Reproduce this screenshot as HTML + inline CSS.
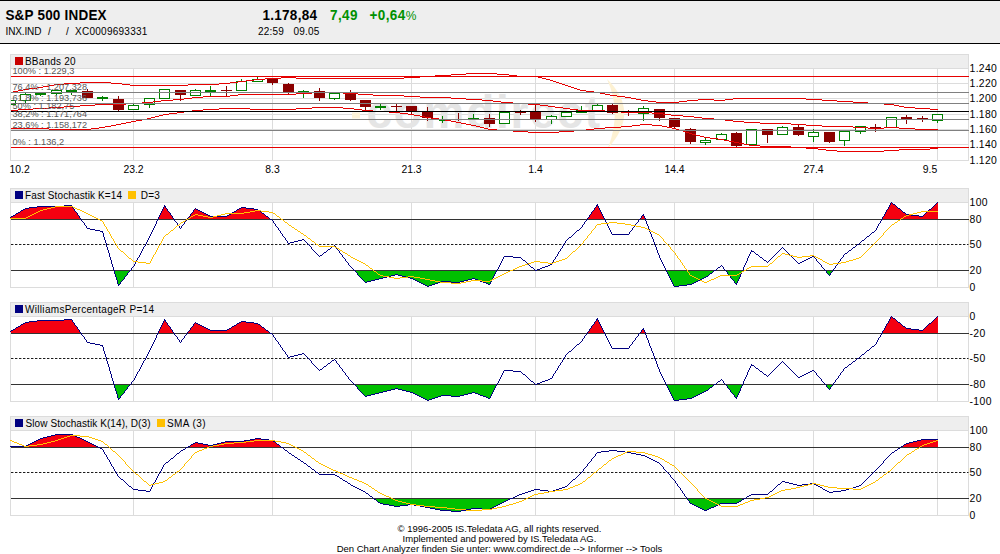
<!DOCTYPE html>
<html><head><meta charset="utf-8"><title>S&amp;P 500 INDEX</title>
<style>
html,body{margin:0;padding:0;background:#fff;}
body{width:1000px;height:554px;position:relative;overflow:hidden;font-family:"Liberation Sans",sans-serif;color:#000;}
#hd{position:absolute;left:0;top:0;width:1000px;height:42px;background:#eeeeee;border-top:1px solid #000;border-bottom:1px solid #000;}
.t{position:absolute;white-space:pre;line-height:1;}
.b{font-weight:bold;font-size:13.5px;transform:scale(1,1.1);transform-origin:0 84.7%;}
.s{font-size:10px;}
.g{color:#009000;}
.ft{position:absolute;left:0;width:999px;text-align:center;font-size:9.5px;line-height:10px;white-space:pre;}
svg{position:absolute;left:0;top:0;}
svg text{font-family:"Liberation Sans",sans-serif;}
</style></head><body>
<div id="hd"></div>
<div class="t b" style="left:5.4px;top:8.5px;letter-spacing:0.2px">S&amp;P 500 INDEX</div>
<div class="t s" style="left:5.6px;top:27.3px;letter-spacing:-0.15px">INX.IND</div>
<div class="t s" style="left:48px;top:27.3px">/</div>
<div class="t s" style="left:66px;top:27.3px">/</div>
<div class="t s" style="left:75px;top:27.3px;letter-spacing:0.26px">XC0009693331</div>
<div class="t b" style="left:262.5px;top:8.7px;letter-spacing:0.27px">1.178,84</div>
<div class="t b g" style="left:330px;top:8.7px;letter-spacing:0.4px">7,49</div>
<div class="t b g" style="left:369.5px;top:8.7px;letter-spacing:0.4px">+0,64<span style="font-weight:normal;font-size:12px;letter-spacing:0">%</span></div>
<div class="t s" style="left:258px;top:27.3px;letter-spacing:0.2px">22:59</div>
<div class="t s" style="left:293.5px;top:27.3px;letter-spacing:0.2px">09.05</div>
<svg width="1000" height="554" viewBox="0 0 1000 554" shape-rendering="crispEdges">
<rect x="10" y="54" width="959" height="106" fill="#fff"/>
<rect x="10" y="54" width="959" height="14" fill="#eeeeee"/>
<rect x="10.5" y="54.5" width="958" height="106" fill="none" stroke="#dcdcdc"/>
<line x1="10.50" y1="68.50" x2="968.50" y2="68.50" stroke="#dcdcdc" stroke-width="1" />
<line x1="133.50" y1="68.00" x2="133.50" y2="160.00" stroke="#dcdcdc" stroke-width="1" />
<line x1="272.50" y1="68.00" x2="272.50" y2="160.00" stroke="#dcdcdc" stroke-width="1" />
<line x1="411.50" y1="68.00" x2="411.50" y2="160.00" stroke="#dcdcdc" stroke-width="1" />
<line x1="535.50" y1="68.00" x2="535.50" y2="160.00" stroke="#dcdcdc" stroke-width="1" />
<line x1="674.50" y1="68.00" x2="674.50" y2="160.00" stroke="#dcdcdc" stroke-width="1" />
<line x1="813.50" y1="68.00" x2="813.50" y2="160.00" stroke="#dcdcdc" stroke-width="1" />
<line x1="937.50" y1="68.00" x2="937.50" y2="160.00" stroke="#dcdcdc" stroke-width="1" />
<line x1="10.50" y1="83.50" x2="968.50" y2="83.50" stroke="#dcdcdc" stroke-width="1" />
<line x1="10.50" y1="98.50" x2="968.50" y2="98.50" stroke="#dcdcdc" stroke-width="1" />
<line x1="10.50" y1="114.50" x2="968.50" y2="114.50" stroke="#dcdcdc" stroke-width="1" />
<line x1="10.50" y1="129.50" x2="968.50" y2="129.50" stroke="#dcdcdc" stroke-width="1" />
<line x1="10.50" y1="144.50" x2="968.50" y2="144.50" stroke="#dcdcdc" stroke-width="1" />
<text x="366.5" y="127.5" font-size="46" font-weight="bold" fill="#e5e5e5" letter-spacing="1.7" style="font-family:'Liberation Sans',sans-serif">comdirect</text>
<rect x="352" y="112.5" width="8" height="6" fill="#fdf3d8" shape-rendering="auto"/>
<path d="M607 79 Q641 112 608 148 Q622 112 607 79Z" fill="#fdf1d2" shape-rendering="auto"/>
<rect x="5.00" y="100.10" width="10" height="4.65" fill="#fff" stroke="#008000" stroke-width="1"/>
<line x1="25.46" y1="92.80" x2="25.46" y2="94.40" stroke="#008000" stroke-width="1" />
<line x1="25.46" y1="101.30" x2="25.46" y2="102.50" stroke="#008000" stroke-width="1" />
<rect x="20.46" y="94.90" width="10" height="5.90" fill="#fff" stroke="#008000" stroke-width="1"/>
<line x1="40.92" y1="94.60" x2="40.92" y2="95.90" stroke="#008000" stroke-width="1" />
<rect x="35.42" y="92.80" width="11" height="1.80" fill="#008000"/>
<line x1="56.37" y1="93.70" x2="56.37" y2="94.80" stroke="#008000" stroke-width="1" />
<rect x="51.37" y="90.80" width="10" height="2.40" fill="#fff" stroke="#008000" stroke-width="1"/>
<line x1="71.83" y1="91.80" x2="71.83" y2="94.50" stroke="#008000" stroke-width="1" />
<rect x="66.33" y="90.00" width="11" height="1.80" fill="#008000"/>
<line x1="87.29" y1="89.20" x2="87.29" y2="91.20" stroke="#8b0000" stroke-width="1" />
<rect x="81.79" y="91.20" width="11" height="6.60" fill="#8b0000"/>
<line x1="102.75" y1="95.50" x2="102.75" y2="96.90" stroke="#008000" stroke-width="1" />
<line x1="102.75" y1="98.60" x2="102.75" y2="100.90" stroke="#008000" stroke-width="1" />
<rect x="97.25" y="96.90" width="11" height="1.70" fill="#008000"/>
<line x1="118.21" y1="96.10" x2="118.21" y2="99.00" stroke="#8b0000" stroke-width="1" />
<line x1="118.21" y1="109.70" x2="118.21" y2="111.20" stroke="#8b0000" stroke-width="1" />
<rect x="112.71" y="99.00" width="11" height="10.70" fill="#8b0000"/>
<line x1="133.66" y1="103.70" x2="133.66" y2="105.10" stroke="#008000" stroke-width="1" />
<rect x="128.66" y="105.60" width="10" height="3.60" fill="#fff" stroke="#008000" stroke-width="1"/>
<line x1="149.12" y1="105.40" x2="149.12" y2="107.70" stroke="#008000" stroke-width="1" />
<rect x="144.12" y="98.90" width="10" height="6.00" fill="#fff" stroke="#008000" stroke-width="1"/>
<rect x="159.58" y="89.70" width="10" height="8.55" fill="#fff" stroke="#008000" stroke-width="1"/>
<line x1="180.04" y1="94.70" x2="180.04" y2="100.50" stroke="#8b0000" stroke-width="1" />
<rect x="174.54" y="90.30" width="11" height="4.40" fill="#8b0000"/>
<line x1="195.50" y1="88.70" x2="195.50" y2="90.30" stroke="#008000" stroke-width="1" />
<rect x="190.50" y="90.80" width="10" height="4.20" fill="#fff" stroke="#008000" stroke-width="1"/>
<line x1="210.95" y1="85.90" x2="210.95" y2="90.00" stroke="#008000" stroke-width="1" />
<line x1="210.95" y1="92.00" x2="210.95" y2="95.70" stroke="#008000" stroke-width="1" />
<rect x="205.45" y="90.00" width="11" height="2.00" fill="#008000"/>
<line x1="226.41" y1="85.90" x2="226.41" y2="95.70" stroke="#8b0000" stroke-width="1" />
<line x1="220.91" y1="90.30" x2="231.91" y2="90.30" stroke="#8b0000" stroke-width="1" />
<line x1="241.87" y1="79.30" x2="241.87" y2="81.40" stroke="#008000" stroke-width="1" />
<rect x="236.87" y="81.90" width="10" height="8.20" fill="#fff" stroke="#008000" stroke-width="1"/>
<line x1="257.33" y1="76.80" x2="257.33" y2="79.40" stroke="#008000" stroke-width="1" />
<rect x="252.33" y="79.90" width="10" height="1.30" fill="#fff" stroke="#008000" stroke-width="1"/>
<line x1="272.79" y1="82.70" x2="272.79" y2="84.90" stroke="#8b0000" stroke-width="1" />
<rect x="267.29" y="78.40" width="11" height="4.30" fill="#8b0000"/>
<line x1="288.24" y1="83.20" x2="288.24" y2="84.30" stroke="#8b0000" stroke-width="1" />
<line x1="288.24" y1="91.90" x2="288.24" y2="94.20" stroke="#8b0000" stroke-width="1" />
<rect x="282.74" y="84.30" width="11" height="7.60" fill="#8b0000"/>
<line x1="303.70" y1="89.80" x2="303.70" y2="90.60" stroke="#008000" stroke-width="1" />
<line x1="303.70" y1="91.90" x2="303.70" y2="97.60" stroke="#008000" stroke-width="1" />
<rect x="298.20" y="90.60" width="11" height="1.30" fill="#008000"/>
<line x1="319.16" y1="88.20" x2="319.16" y2="91.40" stroke="#8b0000" stroke-width="1" />
<line x1="319.16" y1="97.90" x2="319.16" y2="100.90" stroke="#8b0000" stroke-width="1" />
<rect x="313.66" y="91.40" width="11" height="6.50" fill="#8b0000"/>
<line x1="334.62" y1="98.75" x2="334.62" y2="100.00" stroke="#008000" stroke-width="1" />
<rect x="329.62" y="93.20" width="10" height="5.05" fill="#fff" stroke="#008000" stroke-width="1"/>
<line x1="350.08" y1="90.30" x2="350.08" y2="93.00" stroke="#8b0000" stroke-width="1" />
<line x1="350.08" y1="99.70" x2="350.08" y2="100.90" stroke="#8b0000" stroke-width="1" />
<rect x="344.58" y="93.00" width="11" height="6.70" fill="#8b0000"/>
<line x1="365.53" y1="106.50" x2="365.53" y2="110.60" stroke="#8b0000" stroke-width="1" />
<rect x="360.03" y="100.00" width="11" height="6.50" fill="#8b0000"/>
<line x1="380.99" y1="104.10" x2="380.99" y2="106.00" stroke="#008000" stroke-width="1" />
<line x1="380.99" y1="107.80" x2="380.99" y2="109.80" stroke="#008000" stroke-width="1" />
<rect x="375.49" y="106.00" width="11" height="1.80" fill="#008000"/>
<line x1="396.45" y1="103.80" x2="396.45" y2="110.60" stroke="#8b0000" stroke-width="1" />
<line x1="390.95" y1="106.50" x2="401.95" y2="106.50" stroke="#8b0000" stroke-width="1" />
<line x1="411.91" y1="111.40" x2="411.91" y2="114.20" stroke="#8b0000" stroke-width="1" />
<rect x="406.41" y="106.00" width="11" height="5.40" fill="#8b0000"/>
<line x1="427.37" y1="106.50" x2="427.37" y2="112.20" stroke="#8b0000" stroke-width="1" />
<line x1="427.37" y1="118.40" x2="427.37" y2="120.70" stroke="#8b0000" stroke-width="1" />
<rect x="421.87" y="112.20" width="11" height="6.20" fill="#8b0000"/>
<line x1="442.82" y1="116.30" x2="442.82" y2="122.80" stroke="#008000" stroke-width="1" />
<line x1="438.82" y1="120.30" x2="446.82" y2="120.30" stroke="#008000" stroke-width="1" />
<line x1="458.28" y1="113.00" x2="458.28" y2="121.20" stroke="#8b0000" stroke-width="1" />
<line x1="473.74" y1="113.90" x2="473.74" y2="118.40" stroke="#008000" stroke-width="1" />
<line x1="468.24" y1="118.40" x2="479.24" y2="118.40" stroke="#008000" stroke-width="1" />
<line x1="489.20" y1="113.90" x2="489.20" y2="118.40" stroke="#8b0000" stroke-width="1" />
<line x1="489.20" y1="124.40" x2="489.20" y2="126.50" stroke="#8b0000" stroke-width="1" />
<rect x="483.70" y="118.40" width="11" height="6.00" fill="#8b0000"/>
<rect x="499.66" y="112.70" width="10" height="11.20" fill="#fff" stroke="#008000" stroke-width="1"/>
<line x1="520.11" y1="109.80" x2="520.11" y2="115.20" stroke="#8b0000" stroke-width="1" />
<line x1="514.61" y1="112.60" x2="525.61" y2="112.60" stroke="#8b0000" stroke-width="1" />
<line x1="535.57" y1="104.90" x2="535.57" y2="111.90" stroke="#8b0000" stroke-width="1" />
<line x1="535.57" y1="118.70" x2="535.57" y2="121.70" stroke="#8b0000" stroke-width="1" />
<rect x="530.07" y="111.90" width="11" height="6.80" fill="#8b0000"/>
<line x1="551.03" y1="114.90" x2="551.03" y2="116.00" stroke="#008000" stroke-width="1" />
<line x1="551.03" y1="119.60" x2="551.03" y2="123.90" stroke="#008000" stroke-width="1" />
<rect x="546.03" y="116.50" width="10" height="2.60" fill="#fff" stroke="#008000" stroke-width="1"/>
<rect x="561.49" y="112.70" width="10" height="3.70" fill="#fff" stroke="#008000" stroke-width="1"/>
<line x1="581.95" y1="106.10" x2="581.95" y2="109.80" stroke="#008000" stroke-width="1" />
<rect x="576.45" y="109.80" width="11" height="2.80" fill="#008000"/>
<line x1="597.40" y1="103.60" x2="597.40" y2="104.90" stroke="#008000" stroke-width="1" />
<rect x="592.40" y="105.40" width="10" height="4.70" fill="#fff" stroke="#008000" stroke-width="1"/>
<line x1="612.86" y1="103.80" x2="612.86" y2="104.90" stroke="#8b0000" stroke-width="1" />
<line x1="612.86" y1="112.60" x2="612.86" y2="113.90" stroke="#8b0000" stroke-width="1" />
<rect x="607.36" y="104.90" width="11" height="7.70" fill="#8b0000"/>
<line x1="628.32" y1="109.80" x2="628.32" y2="116.00" stroke="#8b0000" stroke-width="1" />
<line x1="643.78" y1="106.10" x2="643.78" y2="108.20" stroke="#008000" stroke-width="1" />
<line x1="643.78" y1="113.50" x2="643.78" y2="120.70" stroke="#008000" stroke-width="1" />
<rect x="638.78" y="108.70" width="10" height="4.30" fill="#fff" stroke="#008000" stroke-width="1"/>
<line x1="659.24" y1="117.90" x2="659.24" y2="120.70" stroke="#8b0000" stroke-width="1" />
<rect x="653.74" y="109.00" width="11" height="8.90" fill="#8b0000"/>
<line x1="674.69" y1="126.90" x2="674.69" y2="128.50" stroke="#8b0000" stroke-width="1" />
<rect x="669.19" y="117.90" width="11" height="9.00" fill="#8b0000"/>
<line x1="690.15" y1="127.70" x2="690.15" y2="129.30" stroke="#8b0000" stroke-width="1" />
<line x1="690.15" y1="141.80" x2="690.15" y2="143.90" stroke="#8b0000" stroke-width="1" />
<rect x="684.65" y="129.30" width="11" height="12.50" fill="#8b0000"/>
<line x1="705.61" y1="138.20" x2="705.61" y2="140.20" stroke="#008000" stroke-width="1" />
<line x1="705.61" y1="142.60" x2="705.61" y2="144.70" stroke="#008000" stroke-width="1" />
<rect x="700.61" y="140.70" width="10" height="1.40" fill="#fff" stroke="#008000" stroke-width="1"/>
<line x1="721.07" y1="133.00" x2="721.07" y2="134.20" stroke="#008000" stroke-width="1" />
<rect x="716.07" y="134.70" width="10" height="4.30" fill="#fff" stroke="#008000" stroke-width="1"/>
<line x1="736.53" y1="131.70" x2="736.53" y2="133.00" stroke="#8b0000" stroke-width="1" />
<line x1="736.53" y1="145.50" x2="736.53" y2="146.70" stroke="#8b0000" stroke-width="1" />
<rect x="731.03" y="133.00" width="11" height="12.50" fill="#8b0000"/>
<rect x="746.98" y="129.80" width="10" height="14.70" fill="#fff" stroke="#008000" stroke-width="1"/>
<line x1="767.44" y1="134.70" x2="767.44" y2="142.60" stroke="#8b0000" stroke-width="1" />
<rect x="761.94" y="129.30" width="11" height="5.40" fill="#8b0000"/>
<line x1="782.90" y1="126.00" x2="782.90" y2="127.20" stroke="#008000" stroke-width="1" />
<rect x="777.90" y="127.70" width="10" height="6.50" fill="#fff" stroke="#008000" stroke-width="1"/>
<line x1="798.36" y1="125.20" x2="798.36" y2="127.20" stroke="#8b0000" stroke-width="1" />
<line x1="798.36" y1="134.70" x2="798.36" y2="135.80" stroke="#8b0000" stroke-width="1" />
<rect x="792.86" y="127.20" width="11" height="7.50" fill="#8b0000"/>
<line x1="813.82" y1="129.30" x2="813.82" y2="132.20" stroke="#008000" stroke-width="1" />
<line x1="813.82" y1="136.60" x2="813.82" y2="141.80" stroke="#008000" stroke-width="1" />
<rect x="808.82" y="132.70" width="10" height="3.40" fill="#fff" stroke="#008000" stroke-width="1"/>
<line x1="829.27" y1="141.50" x2="829.27" y2="142.80" stroke="#8b0000" stroke-width="1" />
<rect x="823.77" y="132.00" width="11" height="9.50" fill="#8b0000"/>
<line x1="844.73" y1="140.70" x2="844.73" y2="145.50" stroke="#008000" stroke-width="1" />
<rect x="839.73" y="131.40" width="10" height="8.80" fill="#fff" stroke="#008000" stroke-width="1"/>
<line x1="860.19" y1="131.80" x2="860.19" y2="133.70" stroke="#008000" stroke-width="1" />
<rect x="855.19" y="126.80" width="10" height="4.50" fill="#fff" stroke="#008000" stroke-width="1"/>
<line x1="875.65" y1="124.10" x2="875.65" y2="127.30" stroke="#8b0000" stroke-width="1" />
<line x1="875.65" y1="128.50" x2="875.65" y2="131.70" stroke="#8b0000" stroke-width="1" />
<rect x="870.15" y="127.30" width="11" height="1.20" fill="#8b0000"/>
<rect x="886.11" y="117.90" width="10" height="9.90" fill="#fff" stroke="#008000" stroke-width="1"/>
<line x1="906.56" y1="115.20" x2="906.56" y2="117.10" stroke="#8b0000" stroke-width="1" />
<line x1="906.56" y1="118.70" x2="906.56" y2="124.40" stroke="#8b0000" stroke-width="1" />
<rect x="901.06" y="117.10" width="11" height="1.60" fill="#8b0000"/>
<line x1="922.02" y1="115.50" x2="922.02" y2="121.70" stroke="#8b0000" stroke-width="1" />
<line x1="916.52" y1="118.40" x2="927.52" y2="118.40" stroke="#8b0000" stroke-width="1" />
<line x1="937.48" y1="120.90" x2="937.48" y2="122.80" stroke="#008000" stroke-width="1" />
<rect x="932.48" y="114.70" width="10" height="5.70" fill="#fff" stroke="#008000" stroke-width="1"/>
<path d="M10 92.5h3M13 91.5h5M18 90.5h5M23 89.5h3M25 89.5h4M29 88.5h8M37 87.5h4M40 87.5h3M43 86.5h6M49 85.5h5M54 84.5h3M56 84.5h8M64 83.5h8M71 83.5h9M80 82.5h8M87 82.5h16M102 82.5h9M111 83.5h8M118 83.5h4M122 84.5h8M130 85.5h4M133 85.5h17M149 85.5h16M164 85.5h17M180 85.5h8M188 84.5h8M195 84.5h16M210 84.5h9M219 83.5h8M226 83.5h4M230 82.5h8M238 81.5h4M241 81.5h5M246 80.5h8M254 79.5h4M257 79.5h8M265 78.5h8M272 78.5h9M281 77.5h8M288 77.5h8M296 78.5h8M303 78.5h17M319 78.5h16M334 78.5h17M350 78.5h16M365 78.5h16M380 78.5h17M396 78.5h8M404 77.5h8M411 77.5h9M420 76.5h8M427 76.5h8M435 75.5h8M442 75.5h9M451 74.5h8M458 74.5h8M466 73.5h8M473 73.5h17M489 73.5h8M497 74.5h8M504 74.5h5M509 75.5h8M517 76.5h4M520 76.5h16M535 76.5h3M538 77.5h4M542 78.5h4M546 79.5h4M550 80.5h2M551 80.5h2M553 81.5h3M556 82.5h3M559 83.5h3M562 84.5h3M565 85.5h2M566 85.5h2M568 86.5h3M571 87.5h3M574 88.5h3M577 89.5h3M580 90.5h2M581 90.5h5M586 91.5h8M594 92.5h4M597 92.5h3M600 93.5h5M605 94.5h5M610 95.5h3M612 95.5h5M617 96.5h8M625 97.5h4M628 97.5h3M631 98.5h5M636 99.5h5M641 100.5h3M643 100.5h5M648 101.5h8M656 102.5h4M659 102.5h16M674 102.5h5M679 101.5h8M687 100.5h4M690 100.5h8M698 99.5h8M705 99.5h9M714 100.5h8M721 100.5h4M725 99.5h8M733 98.5h4M736 98.5h16M751 98.5h17M767 98.5h16M782 98.5h17M798 98.5h8M806 99.5h8M813 99.5h9M822 100.5h8M829 100.5h8M837 101.5h8M844 101.5h9M853 102.5h8M860 102.5h8M868 103.5h8M875 103.5h9M884 104.5h8M891 104.5h3M894 105.5h5M899 106.5h5M904 107.5h3M906 107.5h9M915 108.5h8M922 108.5h8M930 109.5h8" fill="none" stroke="#e60000" stroke-width="1"/>
<path d="M10 110.5h8M18 109.5h8M25 109.5h8M33 108.5h8M40 108.5h9M49 107.5h8M56 107.5h8M64 106.5h8M71 106.5h9M80 105.5h8M87 105.5h8M95 104.5h8M102 104.5h17M118 104.5h8M126 103.5h8M133 103.5h9M142 102.5h8M149 102.5h4M153 101.5h8M161 100.5h4M164 100.5h9M173 99.5h8M180 99.5h4M184 98.5h8M192 97.5h4M195 97.5h8M203 96.5h8M210 96.5h17M226 96.5h4M230 95.5h8M238 94.5h4M241 94.5h17M257 94.5h16M272 94.5h17M288 94.5h8M296 93.5h8M303 93.5h9M312 92.5h8M319 92.5h16M334 92.5h9M343 93.5h8M350 93.5h8M358 94.5h8M365 94.5h8M373 95.5h8M380 95.5h17M396 95.5h8M404 96.5h8M411 96.5h9M420 97.5h8M427 97.5h16M442 97.5h9M451 98.5h8M458 98.5h8M466 99.5h8M473 99.5h9M482 100.5h8M489 100.5h4M493 101.5h8M501 102.5h4M504 102.5h9M513 103.5h8M520 103.5h8M528 104.5h8M535 104.5h5M540 105.5h8M548 106.5h4M551 106.5h4M555 107.5h8M563 108.5h4M566 108.5h4M570 109.5h8M578 110.5h4M581 110.5h17M597 110.5h8M605 111.5h8M612 111.5h9M621 112.5h8M628 112.5h16M643 112.5h9M652 113.5h8M659 113.5h4M663 114.5h8M671 115.5h4M674 115.5h9M683 116.5h8M690 116.5h4M694 117.5h8M702 118.5h4M705 118.5h9M714 119.5h8M721 119.5h4M725 120.5h8M733 121.5h4M736 121.5h8M744 122.5h8M751 122.5h9M760 123.5h8M767 123.5h16M782 123.5h9M791 124.5h8M798 124.5h8M806 125.5h8M813 125.5h9M822 126.5h8M829 126.5h16M844 126.5h9M853 127.5h8M860 127.5h8M868 128.5h8M875 128.5h9M884 127.5h8M891 127.5h8M899 128.5h8M906 128.5h9M915 129.5h8M922 129.5h16" fill="none" stroke="#e60000" stroke-width="1"/>
<path d="M10 128.5h16M25 128.5h16M40 128.5h9M49 129.5h8M56 129.5h16M71 129.5h17M87 129.5h4M91 128.5h8M99 127.5h4M102 127.5h3M105 126.5h6M111 125.5h5M116 124.5h3M118 124.5h3M121 123.5h5M126 122.5h5M131 121.5h3M133 121.5h3M136 120.5h6M142 119.5h5M147 118.5h3M149 118.5h2M151 117.5h4M155 116.5h4M159 115.5h4M163 114.5h2M164 114.5h5M169 113.5h8M177 112.5h4M180 112.5h4M184 111.5h8M192 110.5h4M195 110.5h8M203 109.5h8M210 109.5h9M219 108.5h8M226 108.5h16M241 108.5h9M250 109.5h8M257 109.5h16M272 109.5h17M288 109.5h8M296 108.5h8M303 108.5h9M312 107.5h8M319 107.5h16M334 107.5h9M343 108.5h8M350 108.5h4M354 109.5h8M362 110.5h4M365 110.5h8M373 111.5h8M380 111.5h9M389 112.5h8M396 112.5h4M400 113.5h8M408 114.5h4M411 114.5h3M414 115.5h6M420 116.5h5M425 117.5h3M427 117.5h4M431 118.5h8M439 119.5h4M442 119.5h3M445 120.5h6M451 121.5h5M456 122.5h3M458 122.5h3M461 123.5h5M466 124.5h5M471 125.5h3M473 125.5h3M476 126.5h4M480 127.5h4M484 128.5h4M488 129.5h2M489 129.5h8M497 130.5h8M504 130.5h9M513 131.5h8M520 131.5h8M528 132.5h8M535 132.5h17M551 132.5h8M559 131.5h8M566 131.5h8M574 130.5h8M581 130.5h5M586 129.5h8M594 128.5h4M597 128.5h8M605 127.5h8M612 127.5h9M621 126.5h8M628 126.5h4M632 125.5h8M640 124.5h4M643 124.5h9M652 125.5h8M659 125.5h3M662 126.5h5M667 127.5h5M672 128.5h3M674 128.5h2M676 129.5h3M679 130.5h4M683 131.5h3M686 132.5h3M689 133.5h2M690 133.5h2M692 134.5h4M696 135.5h4M700 136.5h4M704 137.5h2M705 137.5h5M710 138.5h8M718 139.5h4M721 139.5h3M724 140.5h5M729 141.5h5M734 142.5h3M736 142.5h3M739 143.5h5M744 144.5h5M749 145.5h3M751 145.5h9M760 146.5h8M767 146.5h16M782 146.5h9M791 147.5h8M798 147.5h8M806 148.5h8M813 148.5h5M818 149.5h8M826 150.5h4M829 150.5h8M837 151.5h8M844 151.5h17M860 151.5h16M875 151.5h9M884 150.5h8M891 150.5h8M899 149.5h8M906 149.5h17M922 149.5h8M930 148.5h8" fill="none" stroke="#e60000" stroke-width="1"/>
<line x1="10.50" y1="76.50" x2="968.50" y2="76.50" stroke="#e60000" stroke-width="1" />
<line x1="10.50" y1="92.50" x2="968.50" y2="92.50" stroke="#808080" stroke-width="1" />
<line x1="10.50" y1="103.50" x2="968.50" y2="103.50" stroke="#808080" stroke-width="1" />
<line x1="10.50" y1="111.50" x2="968.50" y2="111.50" stroke="#000" stroke-width="1" />
<line x1="10.50" y1="119.50" x2="968.50" y2="119.50" stroke="#808080" stroke-width="1" />
<line x1="10.50" y1="130.50" x2="968.50" y2="130.50" stroke="#808080" stroke-width="1" />
<line x1="10.50" y1="147.50" x2="968.50" y2="147.50" stroke="#e60000" stroke-width="1" />
<text x="12.5" y="73.5" font-size="9.2" fill="#585858" text-anchor="start" class="fib">100% : 1.229,3</text>
<text x="12.5" y="89.5" font-size="9.2" fill="#585858" text-anchor="start" class="fib">76,4% : 1.207,328</text>
<text x="12.5" y="100.5" font-size="9.2" fill="#585858" text-anchor="start" class="fib">61,8% : 1.193,736</text>
<text x="12.5" y="108.5" font-size="9.2" fill="#585858" text-anchor="start" class="fib">50% : 1.182,75</text>
<text x="12.5" y="116.5" font-size="9.2" fill="#585858" text-anchor="start" class="fib">38,2% : 1.171,764</text>
<text x="12.5" y="127.5" font-size="9.2" fill="#585858" text-anchor="start" class="fib">23,6% : 1.158,172</text>
<text x="12.5" y="144.5" font-size="9.2" fill="#585858" text-anchor="start" class="fib">0% : 1.136,2</text>
<rect x="0" y="69" width="10" height="91" fill="#fff"/>
<line x1="10.50" y1="54.00" x2="10.50" y2="160.00" stroke="#dcdcdc" stroke-width="1" />
<rect x="15" y="57" width="8" height="8" fill="#c80000"/>
<text x="25" y="65" font-size="10" fill="#000" text-anchor="start" class="lg" textLength="50.5" lengthAdjust="spacing">BBands 20</text>
<text x="969.5" y="72" font-size="10.4" fill="#000" text-anchor="start" letter-spacing="0.35">1.240</text>
<text x="969.5" y="87" font-size="10.4" fill="#000" text-anchor="start" letter-spacing="0.35">1.220</text>
<text x="969.5" y="102" font-size="10.4" fill="#000" text-anchor="start" letter-spacing="0.35">1.200</text>
<text x="969.5" y="118" font-size="10.4" fill="#000" text-anchor="start" letter-spacing="0.35">1.180</text>
<text x="969.5" y="133" font-size="10.4" fill="#000" text-anchor="start" letter-spacing="0.35">1.160</text>
<text x="969.5" y="148" font-size="10.4" fill="#000" text-anchor="start" letter-spacing="0.35">1.140</text>
<text x="969.5" y="164" font-size="10.4" fill="#000" text-anchor="start" letter-spacing="0.35">1.120</text>
<text x="9.5" y="173" font-size="10.4" fill="#000" text-anchor="start" >10.2</text>
<text x="133.5" y="173" font-size="10.4" fill="#000" text-anchor="middle" >23.2</text>
<text x="272.5" y="173" font-size="10.4" fill="#000" text-anchor="middle" >8.3</text>
<text x="411.5" y="173" font-size="10.4" fill="#000" text-anchor="middle" >21.3</text>
<text x="535.5" y="173" font-size="10.4" fill="#000" text-anchor="middle" >1.4</text>
<text x="674.5" y="173" font-size="10.4" fill="#000" text-anchor="middle" >14.4</text>
<text x="813.5" y="173" font-size="10.4" fill="#000" text-anchor="middle" >27.4</text>
<text x="937.3" y="173" font-size="10.4" fill="#000" text-anchor="end" >9.5</text>
<rect x="10" y="188" width="959" height="14" fill="#eeeeee"/>
<rect x="10.5" y="188.5" width="958" height="99" fill="none" stroke="#dcdcdc"/>
<line x1="10.50" y1="202.50" x2="968.50" y2="202.50" stroke="#dcdcdc" stroke-width="1" />
<line x1="133.50" y1="202.00" x2="133.50" y2="287.00" stroke="#dcdcdc" stroke-width="1" />
<line x1="272.50" y1="202.00" x2="272.50" y2="287.00" stroke="#dcdcdc" stroke-width="1" />
<line x1="411.50" y1="202.00" x2="411.50" y2="287.00" stroke="#dcdcdc" stroke-width="1" />
<line x1="535.50" y1="202.00" x2="535.50" y2="287.00" stroke="#dcdcdc" stroke-width="1" />
<line x1="674.50" y1="202.00" x2="674.50" y2="287.00" stroke="#dcdcdc" stroke-width="1" />
<line x1="813.50" y1="202.00" x2="813.50" y2="287.00" stroke="#dcdcdc" stroke-width="1" />
<line x1="937.50" y1="202.00" x2="937.50" y2="287.00" stroke="#dcdcdc" stroke-width="1" />
<clipPath id="c0a"><rect x="10" y="202" width="960" height="17.5"/></clipPath>
<polygon points="10.5,219.5 10.5,217.5 25.5,208.5 40.5,206.5 56.5,206.5 71.5,205.5 87.5,228.5 102.5,231.5 118.5,285.5 133.5,266.5 149.5,237.5 164.5,205.5 180.5,228.5 195.5,208.5 210.5,216.5 226.5,216.5 241.5,207.5 257.5,209.5 272.5,220.5 288.5,243.5 303.5,239.5 319.5,256.5 334.5,245.5 350.5,266.5 365.5,282.5 380.5,278.5 396.5,274.5 411.5,278.5 427.5,286.5 442.5,281.5 458.5,282.5 473.5,278.5 489.5,284.5 504.5,256.5 520.5,257.5 535.5,270.5 551.5,264.5 566.5,240.5 581.5,227.5 597.5,204.5 612.5,234.5 628.5,234.5 643.5,214.5 659.5,256.5 674.5,286.5 690.5,284.5 705.5,277.5 721.5,265.5 736.5,284.5 751.5,250.5 767.5,262.5 782.5,247.5 798.5,263.5 813.5,256.5 829.5,275.5 844.5,254.5 860.5,242.5 875.5,230.5 891.5,202.5 906.5,214.5 922.5,216.5 937.5,202.5 938.0,202.5 938.0,219.5" fill="#f40010" clip-path="url(#c0a)"/>
<clipPath id="c0b"><rect x="10" y="270.5" width="960" height="17"/></clipPath>
<polygon points="10.5,270.5 10.5,217.5 25.5,208.5 40.5,206.5 56.5,206.5 71.5,205.5 87.5,228.5 102.5,231.5 118.5,285.5 133.5,266.5 149.5,237.5 164.5,205.5 180.5,228.5 195.5,208.5 210.5,216.5 226.5,216.5 241.5,207.5 257.5,209.5 272.5,220.5 288.5,243.5 303.5,239.5 319.5,256.5 334.5,245.5 350.5,266.5 365.5,282.5 380.5,278.5 396.5,274.5 411.5,278.5 427.5,286.5 442.5,281.5 458.5,282.5 473.5,278.5 489.5,284.5 504.5,256.5 520.5,257.5 535.5,270.5 551.5,264.5 566.5,240.5 581.5,227.5 597.5,204.5 612.5,234.5 628.5,234.5 643.5,214.5 659.5,256.5 674.5,286.5 690.5,284.5 705.5,277.5 721.5,265.5 736.5,284.5 751.5,250.5 767.5,262.5 782.5,247.5 798.5,263.5 813.5,256.5 829.5,275.5 844.5,254.5 860.5,242.5 875.5,230.5 891.5,202.5 906.5,214.5 922.5,216.5 937.5,202.5 938.0,202.5 938.0,270.5" fill="#00c000" clip-path="url(#c0b)"/>
<line x1="10.50" y1="219.50" x2="968.50" y2="219.50" stroke="#333" stroke-width="1" />
<line x1="10.50" y1="270.50" x2="968.50" y2="270.50" stroke="#333" stroke-width="1" />
<line x1="11.00" y1="244.50" x2="968.50" y2="244.50" stroke="#1c1c1c" stroke-width="1" stroke-dasharray="2.4 1.6" shape-rendering="auto"/>
<path d="M10 217.5h1M11 216.5h2M13 215.5h2M15 214.5h1M16 213.5h2M18 212.5h2M20 211.5h1M21 210.5h2M23 209.5h2M25 208.5h1M25 208.5h4M29 207.5h8M37 206.5h4M40 206.5h17M56 206.5h8M64 205.5h8M71.5 205v1M72.5 206v2M73.5 208v1M74.5 209v2M75.5 211v1M76.5 212v1M77.5 213v2M78.5 215v1M79.5 216v2M80.5 218v1M81.5 219v2M82.5 221v1M83.5 222v1M84.5 223v2M85.5 225v1M86.5 226v2M87.5 228v1M87 228.5h3M90 229.5h5M95 230.5h5M100 231.5h3M102.5 231v2M103.5 233v4M104.5 237v3M105.5 240v3M106.5 243v4M107.5 247v3M108.5 250v3M109.5 253v4M110.5 257v3M111.5 260v4M112.5 264v3M113.5 267v3M114.5 270v4M115.5 274v3M116.5 277v3M117.5 280v4M118.5 284v2M118.5 285v1M119.5 284v1M120.5 282v2M121.5 281v1M122.5 280v1M123.5 279v1M124.5 277v2M125.5 276v1M126.5 275v1M127.5 273v2M128.5 272v1M129.5 271v1M130.5 270v1M131.5 268v2M132.5 267v1M133.5 266v1M133.5 266v1M134.5 264v2M135.5 262v2M136.5 260v2M137.5 258v2M138.5 257v1M139.5 255v2M140.5 253v2M141.5 251v2M142.5 249v2M143.5 247v2M144.5 246v1M145.5 244v2M146.5 242v2M147.5 240v2M148.5 238v2M149.5 237v1M149.5 236v2M150.5 234v2M151.5 232v2M152.5 230v2M153.5 228v2M154.5 226v2M155.5 224v2M156.5 221v3M157.5 219v2M158.5 217v2M159.5 215v2M160.5 213v2M161.5 211v2M162.5 209v2M163.5 207v2M164.5 205v2M164.5 205v1M165.5 206v2M166.5 208v1M167.5 209v2M168.5 211v1M169.5 212v1M170.5 213v2M171.5 215v1M172.5 216v2M173.5 218v1M174.5 219v2M175.5 221v1M176.5 222v1M177.5 223v2M178.5 225v1M179.5 226v2M180.5 228v1M180.5 228v1M181.5 226v2M182.5 225v1M183.5 224v1M184.5 222v2M185.5 221v1M186.5 220v1M187.5 218v2M188.5 217v1M189.5 216v1M190.5 214v2M191.5 213v1M192.5 212v1M193.5 210v2M194.5 209v1M195.5 208v1M195 208.5h1M196 209.5h2M198 210.5h2M200 211.5h2M202 212.5h2M204 213.5h2M206 214.5h2M208 215.5h2M210 216.5h1M210 216.5h17M226 216.5h1M227 215.5h2M229 214.5h2M231 213.5h1M232 212.5h2M234 211.5h2M236 210.5h1M237 209.5h2M239 208.5h2M241 207.5h1M241 207.5h5M246 208.5h8M254 209.5h4M257 209.5h1M258 210.5h2M260 211.5h1M261 212.5h1M262 213.5h2M264 214.5h1M265 215.5h1M266 216.5h2M268 217.5h1M269 218.5h1M270 219.5h2M272 220.5h1M272.5 220v1M273.5 221v2M274.5 223v1M275.5 224v2M276.5 226v1M277.5 227v1M278.5 228v2M279.5 230v1M280.5 231v2M281.5 233v1M282.5 234v2M283.5 236v1M284.5 237v1M285.5 238v2M286.5 240v1M287.5 241v2M288.5 243v1M288 243.5h2M290 242.5h4M294 241.5h4M298 240.5h4M302 239.5h2M303.5 239v1M304.5 240v1M305.5 241v1M306.5 242v1M307.5 243v1M308.5 244v1M309.5 245v1M310.5 246v1M311.5 247v2M312.5 249v1M313.5 250v1M314.5 251v1M315.5 252v1M316.5 253v1M317.5 254v1M318.5 255v1M319.5 256v1M319 256.5h1M320 255.5h2M322 254.5h1M323 253.5h1M324 252.5h2M326 251.5h1M327 250.5h1M328 249.5h2M330 248.5h1M331 247.5h1M332 246.5h2M334 245.5h1M334.5 245v1M335.5 246v1M336.5 247v2M337.5 249v1M338.5 250v1M339.5 251v2M340.5 253v1M341.5 254v1M342.5 255v2M343.5 257v1M344.5 258v1M345.5 259v2M346.5 261v1M347.5 262v1M348.5 263v2M349.5 265v1M350.5 266v1M350.5 266v1M351.5 267v1M352.5 268v1M353.5 269v1M354.5 270v1M355.5 271v1M356.5 272v1M357.5 273v2M358.5 275v1M359.5 276v1M360.5 277v1M361.5 278v1M362.5 279v1M363.5 280v1M364.5 281v1M365.5 282v1M365 282.5h2M367 281.5h4M371 280.5h4M375 279.5h4M379 278.5h2M380 278.5h3M383 277.5h4M387 276.5h4M391 275.5h4M395 274.5h2M396 274.5h2M398 275.5h4M402 276.5h4M406 277.5h4M410 278.5h2M411 278.5h2M413 279.5h2M415 280.5h2M417 281.5h2M419 282.5h2M421 283.5h2M423 284.5h2M425 285.5h2M427 286.5h1M427 286.5h2M429 285.5h3M432 284.5h3M435 283.5h3M438 282.5h3M441 281.5h2M442 281.5h9M451 282.5h8M458 282.5h2M460 281.5h4M464 280.5h4M468 279.5h4M472 278.5h2M473 278.5h2M475 279.5h3M478 280.5h2M480 281.5h3M483 282.5h3M486 283.5h2M488 284.5h2M489.5 284v1M490.5 282v2M491.5 280v2M492.5 278v2M493.5 276v2M494.5 274v2M495.5 272v2M496.5 270v2M497.5 269v1M498.5 267v2M499.5 265v2M500.5 263v2M501.5 261v2M502.5 259v2M503.5 257v2M504.5 256v1M504 256.5h9M513 257.5h8M520 257.5h1M521 258.5h1M522 259.5h1M523 260.5h2M525 261.5h1M526 262.5h1M527 263.5h1M528 264.5h1M529 265.5h1M530 266.5h1M531 267.5h2M533 268.5h1M534 269.5h1M535 270.5h1M535 270.5h2M537 269.5h3M540 268.5h2M542 267.5h3M545 266.5h3M548 265.5h2M550 264.5h2M551.5 264v1M552.5 262v2M553.5 260v2M554.5 259v1M555.5 257v2M556.5 256v1M557.5 254v2M558.5 252v2M559.5 251v1M560.5 249v2M561.5 248v1M562.5 246v2M563.5 244v2M564.5 243v1M565.5 241v2M566.5 240v1M566 240.5h1M567 239.5h1M568 238.5h1M569 237.5h2M571 236.5h1M572 235.5h1M573 234.5h1M574 233.5h1M575 232.5h1M576 231.5h1M577 230.5h2M579 229.5h1M580 228.5h1M581 227.5h1M581.5 227v1M582.5 225v2M583.5 224v1M584.5 222v2M585.5 221v1M586.5 220v1M587.5 218v2M588.5 217v1M589.5 215v2M590.5 214v1M591.5 212v2M592.5 211v1M593.5 210v1M594.5 208v2M595.5 207v1M596.5 205v2M597.5 204v1M597.5 204v2M598.5 206v2M599.5 208v2M600.5 210v2M601.5 212v2M602.5 214v2M603.5 216v2M604.5 218v2M605.5 220v2M606.5 222v2M607.5 224v2M608.5 226v2M609.5 228v2M610.5 230v2M611.5 232v2M612.5 234v1M612 234.5h17M628.5 234v1M629.5 232v2M630.5 231v1M631.5 230v1M632.5 228v2M633.5 227v1M634.5 226v1M635.5 224v2M636.5 223v1M637.5 222v1M638.5 220v2M639.5 219v1M640.5 218v1M641.5 216v2M642.5 215v1M643.5 214v1M643.5 214v2M644.5 216v2M645.5 218v3M646.5 221v3M647.5 224v2M648.5 226v3M649.5 229v3M650.5 232v2M651.5 234v3M652.5 237v2M653.5 239v3M654.5 242v3M655.5 245v2M656.5 247v3M657.5 250v3M658.5 253v2M659.5 255v2M659.5 256v2M660.5 258v2M661.5 260v2M662.5 262v2M663.5 264v2M664.5 266v2M665.5 268v2M666.5 270v2M667.5 272v2M668.5 274v2M669.5 276v2M670.5 278v2M671.5 280v2M672.5 282v2M673.5 284v2M674.5 286v1M674 286.5h5M679 285.5h8M687 284.5h4M690 284.5h2M692 283.5h2M694 282.5h2M696 281.5h2M698 280.5h2M700 279.5h2M702 278.5h2M704 277.5h2M705 277.5h1M706 276.5h2M708 275.5h1M709 274.5h1M710 273.5h2M712 272.5h1M713 271.5h1M714 270.5h2M716 269.5h1M717 268.5h1M718 267.5h2M720 266.5h1M721 265.5h1M721.5 265v1M722.5 266v1M723.5 267v2M724.5 269v1M725.5 270v1M726.5 271v1M727.5 272v2M728.5 274v1M729.5 275v1M730.5 276v2M731.5 278v1M732.5 279v1M733.5 280v1M734.5 281v2M735.5 283v1M736.5 284v1M736.5 283v2M737.5 281v2M738.5 279v2M739.5 277v2M740.5 274v3M741.5 272v2M742.5 270v2M743.5 267v3M744.5 265v2M745.5 263v2M746.5 261v2M747.5 258v3M748.5 256v2M749.5 254v2M750.5 252v2M751.5 250v2M751 250.5h1M752 251.5h2M754 252.5h1M755 253.5h1M756 254.5h2M758 255.5h1M759 256.5h1M760 257.5h2M762 258.5h1M763 259.5h1M764 260.5h2M766 261.5h1M767 262.5h1M767 262.5h1M768 261.5h1M769 260.5h1M770 259.5h1M771 258.5h1M772 257.5h1M773 256.5h1M774 255.5h1M775 254.5h1M776 253.5h1M777 252.5h1M778 251.5h1M779 250.5h1M780 249.5h1M781 248.5h1M782 247.5h1M782 247.5h1M783 248.5h1M784 249.5h1M785 250.5h1M786 251.5h1M787 252.5h1M788 253.5h1M789 254.5h1M790 255.5h1M791 256.5h1M792 257.5h1M793 258.5h1M794 259.5h1M795 260.5h1M796 261.5h1M797 262.5h1M798 263.5h1M798 263.5h2M800 262.5h2M802 261.5h2M804 260.5h2M806 259.5h2M808 258.5h2M810 257.5h2M812 256.5h2M813.5 256v1M814.5 257v1M815.5 258v1M816.5 259v2M817.5 261v1M818.5 262v1M819.5 263v1M820.5 264v1M821.5 265v2M822.5 267v1M823.5 268v1M824.5 269v1M825.5 270v1M826.5 271v2M827.5 273v1M828.5 274v1M829.5 275v1M829.5 275v1M830.5 273v2M831.5 272v1M832.5 271v1M833.5 269v2M834.5 268v1M835.5 266v2M836.5 265v1M837.5 264v1M838.5 262v2M839.5 261v1M840.5 259v2M841.5 258v1M842.5 257v1M843.5 255v2M844.5 254v1M844 254.5h1M845 253.5h2M847 252.5h1M848 251.5h1M849 250.5h2M851 249.5h1M852 248.5h1M853 247.5h2M855 246.5h1M856 245.5h1M857 244.5h2M859 243.5h1M860 242.5h1M860 242.5h1M861 241.5h1M862 240.5h2M864 239.5h1M865 238.5h1M866 237.5h1M867 236.5h2M869 235.5h1M870 234.5h1M871 233.5h1M872 232.5h2M874 231.5h1M875 230.5h1M875.5 230v1M876.5 228v2M877.5 226v2M878.5 224v2M879.5 223v1M880.5 221v2M881.5 219v2M882.5 217v2M883.5 216v1M884.5 214v2M885.5 212v2M886.5 210v2M887.5 209v1M888.5 207v2M889.5 205v2M890.5 203v2M891.5 202v1M891 202.5h1M892 203.5h1M893 204.5h2M895 205.5h1M896 206.5h1M897 207.5h1M898 208.5h2M900 209.5h1M901 210.5h1M902 211.5h1M903 212.5h2M905 213.5h1M906 214.5h1M906 214.5h5M911 215.5h8M919 216.5h4M922 216.5h1M923 215.5h1M924 214.5h1M925 213.5h1M926 212.5h1M927 211.5h1M928 210.5h1M929 209.5h2M931 208.5h1M932 207.5h1M933 206.5h1M934 205.5h1M935 204.5h1M936 203.5h1M937 202.5h1" fill="none" stroke="#000080" stroke-width="1"/>
<path d="M10 218.5h16M25 218.5h1M26 217.5h2M28 216.5h2M30 215.5h2M32 214.5h2M34 213.5h2M36 212.5h2M38 211.5h2M40 210.5h1M40 210.5h3M43 209.5h4M47 208.5h4M51 207.5h4M55 206.5h2M56 206.5h16M71 206.5h2M73 207.5h2M75 208.5h2M77 209.5h3M80 210.5h2M82 211.5h2M84 212.5h2M86 213.5h2M87 213.5h1M88 214.5h2M90 215.5h2M92 216.5h2M94 217.5h2M96 218.5h2M98 219.5h2M100 220.5h2M102 221.5h1M102.5 221v1M103.5 222v2M104.5 224v2M105.5 226v1M106.5 227v2M107.5 229v2M108.5 231v1M109.5 232v2M110.5 234v2M111.5 236v2M112.5 238v1M113.5 239v2M114.5 241v2M115.5 243v1M116.5 244v2M117.5 246v2M118.5 248v1M118 248.5h1M119 249.5h1M120 250.5h1M121 251.5h2M123 252.5h1M124 253.5h1M125 254.5h1M126 255.5h1M127 256.5h1M128 257.5h1M129 258.5h2M131 259.5h1M132 260.5h1M133 261.5h1M133 261.5h5M138 262.5h8M146 263.5h4M149.5 263v1M150.5 261v2M151.5 259v2M152.5 257v2M153.5 255v2M154.5 254v1M155.5 252v2M156.5 250v2M157.5 248v2M158.5 246v2M159.5 245v1M160.5 243v2M161.5 241v2M162.5 239v2M163.5 237v2M164.5 236v1M164 236.5h1M165 235.5h1M166 234.5h2M168 233.5h1M169 232.5h1M170 231.5h1M171 230.5h2M173 229.5h1M174 228.5h1M175 227.5h1M176 226.5h1M177 225.5h2M179 224.5h1M180 223.5h1M180 223.5h1M181 222.5h2M183 221.5h2M185 220.5h1M186 219.5h2M188 218.5h2M190 217.5h1M191 216.5h2M193 215.5h2M195 214.5h1M195 214.5h3M198 215.5h5M203 216.5h5M208 217.5h3M210 217.5h3M213 216.5h4M217 215.5h4M221 214.5h4M225 213.5h2M226 213.5h16M241 213.5h3M244 212.5h6M250 211.5h5M255 210.5h3M257 210.5h4M261 211.5h8M269 212.5h4M272 212.5h1M273 213.5h2M275 214.5h1M276 215.5h1M277 216.5h2M279 217.5h1M280 218.5h1M281 219.5h2M283 220.5h1M284 221.5h1M285 222.5h2M287 223.5h1M288 224.5h1M288 224.5h1M289 225.5h2M291 226.5h1M292 227.5h2M294 228.5h1M295 229.5h2M297 230.5h1M298 231.5h2M300 232.5h1M301 233.5h2M303 234.5h1M303 234.5h1M304 235.5h2M306 236.5h1M307 237.5h1M308 238.5h2M310 239.5h1M311 240.5h1M312 241.5h2M314 242.5h1M315 243.5h1M316 244.5h2M318 245.5h1M319 246.5h1M319 246.5h16M334 246.5h1M335 247.5h2M337 248.5h2M339 249.5h1M340 250.5h2M342 251.5h1M343 252.5h2M345 253.5h2M347 254.5h1M348 255.5h2M350 256.5h1M350 256.5h1M351 257.5h2M353 258.5h2M355 259.5h2M357 260.5h2M359 261.5h2M361 262.5h2M363 263.5h2M365 264.5h1M365 264.5h1M366 265.5h2M368 266.5h1M369 267.5h1M370 268.5h2M372 269.5h1M373 270.5h1M374 271.5h2M376 272.5h1M377 273.5h1M378 274.5h2M380 275.5h1M380 275.5h3M383 276.5h6M389 277.5h5M394 278.5h3M396 278.5h4M400 277.5h8M408 276.5h4M411 276.5h3M414 277.5h6M420 278.5h5M425 279.5h3M427 279.5h3M430 280.5h5M435 281.5h5M440 282.5h3M442 282.5h9M451 283.5h8M458 283.5h3M461 282.5h5M466 281.5h5M471 280.5h3M473 280.5h9M482 281.5h8M489 281.5h1M490 280.5h2M492 279.5h2M494 278.5h2M496 277.5h2M498 276.5h2M500 275.5h2M502 274.5h2M504 273.5h1M504 273.5h2M506 272.5h2M508 271.5h2M510 270.5h3M513 269.5h2M515 268.5h2M517 267.5h2M519 266.5h2M520 266.5h2M522 265.5h3M525 264.5h3M528 263.5h3M531 262.5h3M534 261.5h2M535 261.5h5M540 262.5h8M548 263.5h4M551 263.5h2M553 262.5h3M556 261.5h3M559 260.5h3M562 259.5h3M565 258.5h2M566 258.5h1M567 257.5h1M568 256.5h1M569 255.5h1M570 254.5h1M571 253.5h1M572 252.5h1M573 251.5h2M575 250.5h1M576 249.5h1M577 248.5h1M578 247.5h1M579 246.5h1M580 245.5h1M581 244.5h1M581.5 244v1M582.5 243v1M583.5 241v2M584.5 240v1M585.5 239v1M586.5 238v1M587.5 236v2M588.5 235v1M589.5 234v1M590.5 233v1M591.5 231v2M592.5 230v1M593.5 229v1M594.5 228v1M595.5 226v2M596.5 225v1M597.5 224v1M597 224.5h4M601 223.5h8M609 222.5h4M612 222.5h5M617 223.5h8M625 224.5h4M628 224.5h3M631 225.5h5M636 226.5h5M641 227.5h3M643 227.5h2M645 228.5h2M647 229.5h2M649 230.5h2M651 231.5h2M653 232.5h2M655 233.5h2M657 234.5h2M659 235.5h1M659.5 235v1M660.5 236v1M661.5 237v1M662.5 238v1M663.5 239v2M664.5 241v1M665.5 242v1M666.5 243v1M667.5 244v1M668.5 245v1M669.5 246v1M670.5 247v2M671.5 249v1M672.5 250v1M673.5 251v1M674.5 252v1M674.5 252v1M675.5 253v2M676.5 255v1M677.5 256v2M678.5 258v1M679.5 259v1M680.5 260v2M681.5 262v1M682.5 263v2M683.5 265v1M684.5 266v2M685.5 268v1M686.5 269v1M687.5 270v2M688.5 272v1M689.5 273v2M690.5 275v1M690 275.5h2M692 276.5h2M694 277.5h2M696 278.5h2M698 279.5h2M700 280.5h2M702 281.5h2M704 282.5h2M705 282.5h2M707 281.5h2M709 280.5h2M711 279.5h3M714 278.5h2M716 277.5h2M718 276.5h2M720 275.5h2M721 275.5h16M736 275.5h1M737 274.5h2M739 273.5h2M741 272.5h1M742 271.5h2M744 270.5h2M746 269.5h1M747 268.5h2M749 267.5h2M751 266.5h1M751 266.5h17M767 266.5h1M768 265.5h1M769 264.5h1M770 263.5h2M772 262.5h1M773 261.5h1M774 260.5h1M775 259.5h1M776 258.5h1M777 257.5h1M778 256.5h2M780 255.5h1M781 254.5h1M782 253.5h1M782 253.5h3M785 254.5h4M789 255.5h4M793 256.5h4M797 257.5h2M798 257.5h4M802 256.5h8M810 255.5h4M813 255.5h1M814 256.5h2M816 257.5h2M818 258.5h2M820 259.5h2M822 260.5h1M823 261.5h2M825 262.5h2M827 263.5h2M829 264.5h1M829 264.5h4M833 263.5h8M841 262.5h4M844 262.5h2M846 261.5h3M849 260.5h4M853 259.5h3M856 258.5h3M859 257.5h2M860 257.5h1M861 256.5h1M862 255.5h1M863 254.5h1M864 253.5h1M865 252.5h1M866 251.5h1M867 250.5h1M868 249.5h1M869 248.5h1M870 247.5h1M871 246.5h1M872 245.5h1M873 244.5h1M874 243.5h1M875 242.5h1M875.5 242v1M876.5 241v1M877.5 240v1M878.5 239v1M879.5 238v1M880.5 237v1M881.5 236v1M882.5 235v1M883.5 233v2M884.5 232v1M885.5 231v1M886.5 230v1M887.5 229v1M888.5 228v1M889.5 227v1M890.5 226v1M891.5 225v1M891 225.5h1M892 224.5h2M894 223.5h1M895 222.5h2M897 221.5h1M898 220.5h2M900 219.5h1M901 218.5h2M903 217.5h1M904 216.5h2M906 215.5h1M906 215.5h3M909 214.5h4M913 213.5h4M917 212.5h4M921 211.5h2M922 211.5h16" fill="none" stroke="#ffc000" stroke-width="1"/>
<rect x="15" y="191" width="8" height="8" fill="#000080"/>
<text x="25" y="199" font-size="10" fill="#000" text-anchor="start" class="lg" textLength="97" lengthAdjust="spacing">Fast Stochastik K=14</text>
<rect x="128" y="191" width="8" height="8" fill="#ffc000"/>
<text x="140.8" y="199" font-size="10" fill="#000" text-anchor="start" class="lg" textLength="19" lengthAdjust="spacing">D=3</text>
<text x="969.5" y="206" font-size="10.4" fill="#000" text-anchor="start" letter-spacing="0.4">100</text>
<text x="969.5" y="223" font-size="10.4" fill="#000" text-anchor="start" letter-spacing="0.4">80</text>
<text x="969.5" y="248" font-size="10.4" fill="#000" text-anchor="start" letter-spacing="0.4">50</text>
<text x="969.5" y="274" font-size="10.4" fill="#000" text-anchor="start" letter-spacing="0.4">20</text>
<text x="969.5" y="291" font-size="10.4" fill="#000" text-anchor="start" letter-spacing="0.4">0</text>
<rect x="10" y="302" width="959" height="14" fill="#eeeeee"/>
<rect x="10.5" y="302.5" width="958" height="99" fill="none" stroke="#dcdcdc"/>
<line x1="10.50" y1="316.50" x2="968.50" y2="316.50" stroke="#dcdcdc" stroke-width="1" />
<line x1="133.50" y1="316.00" x2="133.50" y2="401.00" stroke="#dcdcdc" stroke-width="1" />
<line x1="272.50" y1="316.00" x2="272.50" y2="401.00" stroke="#dcdcdc" stroke-width="1" />
<line x1="411.50" y1="316.00" x2="411.50" y2="401.00" stroke="#dcdcdc" stroke-width="1" />
<line x1="535.50" y1="316.00" x2="535.50" y2="401.00" stroke="#dcdcdc" stroke-width="1" />
<line x1="674.50" y1="316.00" x2="674.50" y2="401.00" stroke="#dcdcdc" stroke-width="1" />
<line x1="813.50" y1="316.00" x2="813.50" y2="401.00" stroke="#dcdcdc" stroke-width="1" />
<line x1="937.50" y1="316.00" x2="937.50" y2="401.00" stroke="#dcdcdc" stroke-width="1" />
<clipPath id="c114a"><rect x="10" y="316" width="960" height="17.5"/></clipPath>
<polygon points="10.5,333.5 10.5,331.5 25.5,322.5 40.5,320.5 56.5,320.5 71.5,319.5 87.5,342.5 102.5,345.5 118.5,399.5 133.5,380.5 149.5,351.5 164.5,319.5 180.5,342.5 195.5,322.5 210.5,330.5 226.5,330.5 241.5,321.5 257.5,323.5 272.5,334.5 288.5,357.5 303.5,353.5 319.5,370.5 334.5,359.5 350.5,380.5 365.5,396.5 380.5,392.5 396.5,388.5 411.5,392.5 427.5,400.5 442.5,395.5 458.5,396.5 473.5,392.5 489.5,398.5 504.5,370.5 520.5,371.5 535.5,384.5 551.5,378.5 566.5,354.5 581.5,341.5 597.5,318.5 612.5,348.5 628.5,348.5 643.5,328.5 659.5,370.5 674.5,400.5 690.5,398.5 705.5,391.5 721.5,379.5 736.5,398.5 751.5,364.5 767.5,376.5 782.5,361.5 798.5,377.5 813.5,370.5 829.5,389.5 844.5,368.5 860.5,356.5 875.5,344.5 891.5,316.5 906.5,328.5 922.5,330.5 937.5,316.5 938.0,316.5 938.0,333.5" fill="#f40010" clip-path="url(#c114a)"/>
<clipPath id="c114b"><rect x="10" y="384.5" width="960" height="17"/></clipPath>
<polygon points="10.5,384.5 10.5,331.5 25.5,322.5 40.5,320.5 56.5,320.5 71.5,319.5 87.5,342.5 102.5,345.5 118.5,399.5 133.5,380.5 149.5,351.5 164.5,319.5 180.5,342.5 195.5,322.5 210.5,330.5 226.5,330.5 241.5,321.5 257.5,323.5 272.5,334.5 288.5,357.5 303.5,353.5 319.5,370.5 334.5,359.5 350.5,380.5 365.5,396.5 380.5,392.5 396.5,388.5 411.5,392.5 427.5,400.5 442.5,395.5 458.5,396.5 473.5,392.5 489.5,398.5 504.5,370.5 520.5,371.5 535.5,384.5 551.5,378.5 566.5,354.5 581.5,341.5 597.5,318.5 612.5,348.5 628.5,348.5 643.5,328.5 659.5,370.5 674.5,400.5 690.5,398.5 705.5,391.5 721.5,379.5 736.5,398.5 751.5,364.5 767.5,376.5 782.5,361.5 798.5,377.5 813.5,370.5 829.5,389.5 844.5,368.5 860.5,356.5 875.5,344.5 891.5,316.5 906.5,328.5 922.5,330.5 937.5,316.5 938.0,316.5 938.0,384.5" fill="#00c000" clip-path="url(#c114b)"/>
<line x1="10.50" y1="333.50" x2="968.50" y2="333.50" stroke="#333" stroke-width="1" />
<line x1="10.50" y1="384.50" x2="968.50" y2="384.50" stroke="#333" stroke-width="1" />
<line x1="11.00" y1="358.50" x2="968.50" y2="358.50" stroke="#1c1c1c" stroke-width="1" stroke-dasharray="2.4 1.6" shape-rendering="auto"/>
<path d="M10 331.5h1M11 330.5h2M13 329.5h2M15 328.5h1M16 327.5h2M18 326.5h2M20 325.5h1M21 324.5h2M23 323.5h2M25 322.5h1M25 322.5h4M29 321.5h8M37 320.5h4M40 320.5h17M56 320.5h8M64 319.5h8M71.5 319v1M72.5 320v2M73.5 322v1M74.5 323v2M75.5 325v1M76.5 326v1M77.5 327v2M78.5 329v1M79.5 330v2M80.5 332v1M81.5 333v2M82.5 335v1M83.5 336v1M84.5 337v2M85.5 339v1M86.5 340v2M87.5 342v1M87 342.5h3M90 343.5h5M95 344.5h5M100 345.5h3M102.5 345v2M103.5 347v4M104.5 351v3M105.5 354v3M106.5 357v4M107.5 361v3M108.5 364v3M109.5 367v4M110.5 371v3M111.5 374v4M112.5 378v3M113.5 381v3M114.5 384v4M115.5 388v3M116.5 391v3M117.5 394v4M118.5 398v2M118.5 399v1M119.5 398v1M120.5 396v2M121.5 395v1M122.5 394v1M123.5 393v1M124.5 391v2M125.5 390v1M126.5 389v1M127.5 387v2M128.5 386v1M129.5 385v1M130.5 384v1M131.5 382v2M132.5 381v1M133.5 380v1M133.5 380v1M134.5 378v2M135.5 376v2M136.5 374v2M137.5 372v2M138.5 371v1M139.5 369v2M140.5 367v2M141.5 365v2M142.5 363v2M143.5 361v2M144.5 360v1M145.5 358v2M146.5 356v2M147.5 354v2M148.5 352v2M149.5 351v1M149.5 350v2M150.5 348v2M151.5 346v2M152.5 344v2M153.5 342v2M154.5 340v2M155.5 338v2M156.5 335v3M157.5 333v2M158.5 331v2M159.5 329v2M160.5 327v2M161.5 325v2M162.5 323v2M163.5 321v2M164.5 319v2M164.5 319v1M165.5 320v2M166.5 322v1M167.5 323v2M168.5 325v1M169.5 326v1M170.5 327v2M171.5 329v1M172.5 330v2M173.5 332v1M174.5 333v2M175.5 335v1M176.5 336v1M177.5 337v2M178.5 339v1M179.5 340v2M180.5 342v1M180.5 342v1M181.5 340v2M182.5 339v1M183.5 338v1M184.5 336v2M185.5 335v1M186.5 334v1M187.5 332v2M188.5 331v1M189.5 330v1M190.5 328v2M191.5 327v1M192.5 326v1M193.5 324v2M194.5 323v1M195.5 322v1M195 322.5h1M196 323.5h2M198 324.5h2M200 325.5h2M202 326.5h2M204 327.5h2M206 328.5h2M208 329.5h2M210 330.5h1M210 330.5h17M226 330.5h1M227 329.5h2M229 328.5h2M231 327.5h1M232 326.5h2M234 325.5h2M236 324.5h1M237 323.5h2M239 322.5h2M241 321.5h1M241 321.5h5M246 322.5h8M254 323.5h4M257 323.5h1M258 324.5h2M260 325.5h1M261 326.5h1M262 327.5h2M264 328.5h1M265 329.5h1M266 330.5h2M268 331.5h1M269 332.5h1M270 333.5h2M272 334.5h1M272.5 334v1M273.5 335v2M274.5 337v1M275.5 338v2M276.5 340v1M277.5 341v1M278.5 342v2M279.5 344v1M280.5 345v2M281.5 347v1M282.5 348v2M283.5 350v1M284.5 351v1M285.5 352v2M286.5 354v1M287.5 355v2M288.5 357v1M288 357.5h2M290 356.5h4M294 355.5h4M298 354.5h4M302 353.5h2M303.5 353v1M304.5 354v1M305.5 355v1M306.5 356v1M307.5 357v1M308.5 358v1M309.5 359v1M310.5 360v1M311.5 361v2M312.5 363v1M313.5 364v1M314.5 365v1M315.5 366v1M316.5 367v1M317.5 368v1M318.5 369v1M319.5 370v1M319 370.5h1M320 369.5h2M322 368.5h1M323 367.5h1M324 366.5h2M326 365.5h1M327 364.5h1M328 363.5h2M330 362.5h1M331 361.5h1M332 360.5h2M334 359.5h1M334.5 359v1M335.5 360v1M336.5 361v2M337.5 363v1M338.5 364v1M339.5 365v2M340.5 367v1M341.5 368v1M342.5 369v2M343.5 371v1M344.5 372v1M345.5 373v2M346.5 375v1M347.5 376v1M348.5 377v2M349.5 379v1M350.5 380v1M350.5 380v1M351.5 381v1M352.5 382v1M353.5 383v1M354.5 384v1M355.5 385v1M356.5 386v1M357.5 387v2M358.5 389v1M359.5 390v1M360.5 391v1M361.5 392v1M362.5 393v1M363.5 394v1M364.5 395v1M365.5 396v1M365 396.5h2M367 395.5h4M371 394.5h4M375 393.5h4M379 392.5h2M380 392.5h3M383 391.5h4M387 390.5h4M391 389.5h4M395 388.5h2M396 388.5h2M398 389.5h4M402 390.5h4M406 391.5h4M410 392.5h2M411 392.5h2M413 393.5h2M415 394.5h2M417 395.5h2M419 396.5h2M421 397.5h2M423 398.5h2M425 399.5h2M427 400.5h1M427 400.5h2M429 399.5h3M432 398.5h3M435 397.5h3M438 396.5h3M441 395.5h2M442 395.5h9M451 396.5h8M458 396.5h2M460 395.5h4M464 394.5h4M468 393.5h4M472 392.5h2M473 392.5h2M475 393.5h3M478 394.5h2M480 395.5h3M483 396.5h3M486 397.5h2M488 398.5h2M489.5 398v1M490.5 396v2M491.5 394v2M492.5 392v2M493.5 390v2M494.5 388v2M495.5 386v2M496.5 384v2M497.5 383v1M498.5 381v2M499.5 379v2M500.5 377v2M501.5 375v2M502.5 373v2M503.5 371v2M504.5 370v1M504 370.5h9M513 371.5h8M520 371.5h1M521 372.5h1M522 373.5h1M523 374.5h2M525 375.5h1M526 376.5h1M527 377.5h1M528 378.5h1M529 379.5h1M530 380.5h1M531 381.5h2M533 382.5h1M534 383.5h1M535 384.5h1M535 384.5h2M537 383.5h3M540 382.5h2M542 381.5h3M545 380.5h3M548 379.5h2M550 378.5h2M551.5 378v1M552.5 376v2M553.5 374v2M554.5 373v1M555.5 371v2M556.5 370v1M557.5 368v2M558.5 366v2M559.5 365v1M560.5 363v2M561.5 362v1M562.5 360v2M563.5 358v2M564.5 357v1M565.5 355v2M566.5 354v1M566 354.5h1M567 353.5h1M568 352.5h1M569 351.5h2M571 350.5h1M572 349.5h1M573 348.5h1M574 347.5h1M575 346.5h1M576 345.5h1M577 344.5h2M579 343.5h1M580 342.5h1M581 341.5h1M581.5 341v1M582.5 339v2M583.5 338v1M584.5 336v2M585.5 335v1M586.5 334v1M587.5 332v2M588.5 331v1M589.5 329v2M590.5 328v1M591.5 326v2M592.5 325v1M593.5 324v1M594.5 322v2M595.5 321v1M596.5 319v2M597.5 318v1M597.5 318v2M598.5 320v2M599.5 322v2M600.5 324v2M601.5 326v2M602.5 328v2M603.5 330v2M604.5 332v2M605.5 334v2M606.5 336v2M607.5 338v2M608.5 340v2M609.5 342v2M610.5 344v2M611.5 346v2M612.5 348v1M612 348.5h17M628.5 348v1M629.5 346v2M630.5 345v1M631.5 344v1M632.5 342v2M633.5 341v1M634.5 340v1M635.5 338v2M636.5 337v1M637.5 336v1M638.5 334v2M639.5 333v1M640.5 332v1M641.5 330v2M642.5 329v1M643.5 328v1M643.5 328v2M644.5 330v2M645.5 332v3M646.5 335v3M647.5 338v2M648.5 340v3M649.5 343v3M650.5 346v2M651.5 348v3M652.5 351v2M653.5 353v3M654.5 356v3M655.5 359v2M656.5 361v3M657.5 364v3M658.5 367v2M659.5 369v2M659.5 370v2M660.5 372v2M661.5 374v2M662.5 376v2M663.5 378v2M664.5 380v2M665.5 382v2M666.5 384v2M667.5 386v2M668.5 388v2M669.5 390v2M670.5 392v2M671.5 394v2M672.5 396v2M673.5 398v2M674.5 400v1M674 400.5h5M679 399.5h8M687 398.5h4M690 398.5h2M692 397.5h2M694 396.5h2M696 395.5h2M698 394.5h2M700 393.5h2M702 392.5h2M704 391.5h2M705 391.5h1M706 390.5h2M708 389.5h1M709 388.5h1M710 387.5h2M712 386.5h1M713 385.5h1M714 384.5h2M716 383.5h1M717 382.5h1M718 381.5h2M720 380.5h1M721 379.5h1M721.5 379v1M722.5 380v1M723.5 381v2M724.5 383v1M725.5 384v1M726.5 385v1M727.5 386v2M728.5 388v1M729.5 389v1M730.5 390v2M731.5 392v1M732.5 393v1M733.5 394v1M734.5 395v2M735.5 397v1M736.5 398v1M736.5 397v2M737.5 395v2M738.5 393v2M739.5 391v2M740.5 388v3M741.5 386v2M742.5 384v2M743.5 381v3M744.5 379v2M745.5 377v2M746.5 375v2M747.5 372v3M748.5 370v2M749.5 368v2M750.5 366v2M751.5 364v2M751 364.5h1M752 365.5h2M754 366.5h1M755 367.5h1M756 368.5h2M758 369.5h1M759 370.5h1M760 371.5h2M762 372.5h1M763 373.5h1M764 374.5h2M766 375.5h1M767 376.5h1M767 376.5h1M768 375.5h1M769 374.5h1M770 373.5h1M771 372.5h1M772 371.5h1M773 370.5h1M774 369.5h1M775 368.5h1M776 367.5h1M777 366.5h1M778 365.5h1M779 364.5h1M780 363.5h1M781 362.5h1M782 361.5h1M782 361.5h1M783 362.5h1M784 363.5h1M785 364.5h1M786 365.5h1M787 366.5h1M788 367.5h1M789 368.5h1M790 369.5h1M791 370.5h1M792 371.5h1M793 372.5h1M794 373.5h1M795 374.5h1M796 375.5h1M797 376.5h1M798 377.5h1M798 377.5h2M800 376.5h2M802 375.5h2M804 374.5h2M806 373.5h2M808 372.5h2M810 371.5h2M812 370.5h2M813.5 370v1M814.5 371v1M815.5 372v1M816.5 373v2M817.5 375v1M818.5 376v1M819.5 377v1M820.5 378v1M821.5 379v2M822.5 381v1M823.5 382v1M824.5 383v1M825.5 384v1M826.5 385v2M827.5 387v1M828.5 388v1M829.5 389v1M829.5 389v1M830.5 387v2M831.5 386v1M832.5 385v1M833.5 383v2M834.5 382v1M835.5 380v2M836.5 379v1M837.5 378v1M838.5 376v2M839.5 375v1M840.5 373v2M841.5 372v1M842.5 371v1M843.5 369v2M844.5 368v1M844 368.5h1M845 367.5h2M847 366.5h1M848 365.5h1M849 364.5h2M851 363.5h1M852 362.5h1M853 361.5h2M855 360.5h1M856 359.5h1M857 358.5h2M859 357.5h1M860 356.5h1M860 356.5h1M861 355.5h1M862 354.5h2M864 353.5h1M865 352.5h1M866 351.5h1M867 350.5h2M869 349.5h1M870 348.5h1M871 347.5h1M872 346.5h2M874 345.5h1M875 344.5h1M875.5 344v1M876.5 342v2M877.5 340v2M878.5 338v2M879.5 337v1M880.5 335v2M881.5 333v2M882.5 331v2M883.5 330v1M884.5 328v2M885.5 326v2M886.5 324v2M887.5 323v1M888.5 321v2M889.5 319v2M890.5 317v2M891.5 316v1M891 316.5h1M892 317.5h1M893 318.5h2M895 319.5h1M896 320.5h1M897 321.5h1M898 322.5h2M900 323.5h1M901 324.5h1M902 325.5h1M903 326.5h2M905 327.5h1M906 328.5h1M906 328.5h5M911 329.5h8M919 330.5h4M922 330.5h1M923 329.5h1M924 328.5h1M925 327.5h1M926 326.5h1M927 325.5h1M928 324.5h1M929 323.5h2M931 322.5h1M932 321.5h1M933 320.5h1M934 319.5h1M935 318.5h1M936 317.5h1M937 316.5h1" fill="none" stroke="#000080" stroke-width="1"/>
<rect x="15" y="305" width="8" height="8" fill="#000080"/>
<text x="25" y="313" font-size="10" fill="#000" text-anchor="start" class="lg" textLength="129" lengthAdjust="spacing">WilliamsPercentageR P=14</text>
<text x="969.5" y="320" font-size="10.4" fill="#000" text-anchor="start" letter-spacing="0.4">0</text>
<text x="969.5" y="337" font-size="10.4" fill="#000" text-anchor="start" letter-spacing="0.4">-20</text>
<text x="969.5" y="362" font-size="10.4" fill="#000" text-anchor="start" letter-spacing="0.4">-50</text>
<text x="969.5" y="388" font-size="10.4" fill="#000" text-anchor="start" letter-spacing="0.4">-80</text>
<text x="969.5" y="405" font-size="10.4" fill="#000" text-anchor="start" letter-spacing="0.4">-100</text>
<rect x="10" y="416" width="959" height="14" fill="#eeeeee"/>
<rect x="10.5" y="416.5" width="958" height="99" fill="none" stroke="#dcdcdc"/>
<line x1="10.50" y1="430.50" x2="968.50" y2="430.50" stroke="#dcdcdc" stroke-width="1" />
<line x1="133.50" y1="430.00" x2="133.50" y2="515.00" stroke="#dcdcdc" stroke-width="1" />
<line x1="272.50" y1="430.00" x2="272.50" y2="515.00" stroke="#dcdcdc" stroke-width="1" />
<line x1="411.50" y1="430.00" x2="411.50" y2="515.00" stroke="#dcdcdc" stroke-width="1" />
<line x1="535.50" y1="430.00" x2="535.50" y2="515.00" stroke="#dcdcdc" stroke-width="1" />
<line x1="674.50" y1="430.00" x2="674.50" y2="515.00" stroke="#dcdcdc" stroke-width="1" />
<line x1="813.50" y1="430.00" x2="813.50" y2="515.00" stroke="#dcdcdc" stroke-width="1" />
<line x1="937.50" y1="430.00" x2="937.50" y2="515.00" stroke="#dcdcdc" stroke-width="1" />
<clipPath id="c228a"><rect x="10" y="430" width="960" height="17.5"/></clipPath>
<polygon points="10.5,447.5 10.5,446.5 25.5,446.5 40.5,438.5 56.5,434.5 71.5,434.5 87.5,441.5 102.5,449.5 118.5,476.5 133.5,489.5 149.5,491.5 164.5,464.5 180.5,451.5 195.5,442.5 210.5,445.5 226.5,441.5 241.5,441.5 257.5,438.5 272.5,440.5 288.5,452.5 303.5,462.5 319.5,474.5 334.5,474.5 350.5,484.5 365.5,492.5 380.5,503.5 396.5,506.5 411.5,504.5 427.5,507.5 442.5,510.5 458.5,511.5 473.5,508.5 489.5,509.5 504.5,501.5 520.5,494.5 535.5,489.5 551.5,491.5 566.5,486.5 581.5,472.5 597.5,452.5 612.5,450.5 628.5,452.5 643.5,455.5 659.5,463.5 674.5,480.5 690.5,503.5 705.5,510.5 721.5,503.5 736.5,503.5 751.5,494.5 767.5,494.5 782.5,481.5 798.5,485.5 813.5,483.5 829.5,492.5 844.5,490.5 860.5,485.5 875.5,470.5 891.5,453.5 906.5,443.5 922.5,439.5 937.5,439.5 938.0,439.5 938.0,447.5" fill="#f40010" clip-path="url(#c228a)"/>
<clipPath id="c228b"><rect x="10" y="498.5" width="960" height="17"/></clipPath>
<polygon points="10.5,498.5 10.5,446.5 25.5,446.5 40.5,438.5 56.5,434.5 71.5,434.5 87.5,441.5 102.5,449.5 118.5,476.5 133.5,489.5 149.5,491.5 164.5,464.5 180.5,451.5 195.5,442.5 210.5,445.5 226.5,441.5 241.5,441.5 257.5,438.5 272.5,440.5 288.5,452.5 303.5,462.5 319.5,474.5 334.5,474.5 350.5,484.5 365.5,492.5 380.5,503.5 396.5,506.5 411.5,504.5 427.5,507.5 442.5,510.5 458.5,511.5 473.5,508.5 489.5,509.5 504.5,501.5 520.5,494.5 535.5,489.5 551.5,491.5 566.5,486.5 581.5,472.5 597.5,452.5 612.5,450.5 628.5,452.5 643.5,455.5 659.5,463.5 674.5,480.5 690.5,503.5 705.5,510.5 721.5,503.5 736.5,503.5 751.5,494.5 767.5,494.5 782.5,481.5 798.5,485.5 813.5,483.5 829.5,492.5 844.5,490.5 860.5,485.5 875.5,470.5 891.5,453.5 906.5,443.5 922.5,439.5 937.5,439.5 938.0,439.5 938.0,498.5" fill="#00c000" clip-path="url(#c228b)"/>
<line x1="10.50" y1="447.50" x2="968.50" y2="447.50" stroke="#333" stroke-width="1" />
<line x1="10.50" y1="498.50" x2="968.50" y2="498.50" stroke="#333" stroke-width="1" />
<line x1="11.00" y1="472.50" x2="968.50" y2="472.50" stroke="#1c1c1c" stroke-width="1" stroke-dasharray="2.4 1.6" shape-rendering="auto"/>
<path d="M10 446.5h16M25 446.5h1M26 445.5h2M28 444.5h2M30 443.5h2M32 442.5h2M34 441.5h2M36 440.5h2M38 439.5h2M40 438.5h1M40 438.5h3M43 437.5h4M47 436.5h4M51 435.5h4M55 434.5h2M56 434.5h16M71 434.5h2M73 435.5h2M75 436.5h2M77 437.5h3M80 438.5h2M82 439.5h2M84 440.5h2M86 441.5h2M87 441.5h1M88 442.5h2M90 443.5h2M92 444.5h2M94 445.5h2M96 446.5h2M98 447.5h2M100 448.5h2M102 449.5h1M102.5 449v1M103.5 450v2M104.5 452v2M105.5 454v1M106.5 455v2M107.5 457v2M108.5 459v1M109.5 460v2M110.5 462v2M111.5 464v2M112.5 466v1M113.5 467v2M114.5 469v2M115.5 471v1M116.5 472v2M117.5 474v2M118.5 476v1M118 476.5h1M119 477.5h1M120 478.5h1M121 479.5h2M123 480.5h1M124 481.5h1M125 482.5h1M126 483.5h1M127 484.5h1M128 485.5h1M129 486.5h2M131 487.5h1M132 488.5h1M133 489.5h1M133 489.5h5M138 490.5h8M146 491.5h4M149.5 491v1M150.5 489v2M151.5 487v2M152.5 485v2M153.5 483v2M154.5 482v1M155.5 480v2M156.5 478v2M157.5 476v2M158.5 474v2M159.5 473v1M160.5 471v2M161.5 469v2M162.5 467v2M163.5 465v2M164.5 464v1M164 464.5h1M165 463.5h1M166 462.5h2M168 461.5h1M169 460.5h1M170 459.5h1M171 458.5h2M173 457.5h1M174 456.5h1M175 455.5h1M176 454.5h1M177 453.5h2M179 452.5h1M180 451.5h1M180 451.5h1M181 450.5h2M183 449.5h2M185 448.5h1M186 447.5h2M188 446.5h2M190 445.5h1M191 444.5h2M193 443.5h2M195 442.5h1M195 442.5h3M198 443.5h5M203 444.5h5M208 445.5h3M210 445.5h3M213 444.5h4M217 443.5h4M221 442.5h4M225 441.5h2M226 441.5h16M241 441.5h3M244 440.5h6M250 439.5h5M255 438.5h3M257 438.5h4M261 439.5h8M269 440.5h4M272 440.5h1M273 441.5h2M275 442.5h1M276 443.5h1M277 444.5h2M279 445.5h1M280 446.5h1M281 447.5h2M283 448.5h1M284 449.5h1M285 450.5h2M287 451.5h1M288 452.5h1M288 452.5h1M289 453.5h2M291 454.5h1M292 455.5h2M294 456.5h1M295 457.5h2M297 458.5h1M298 459.5h2M300 460.5h1M301 461.5h2M303 462.5h1M303 462.5h1M304 463.5h2M306 464.5h1M307 465.5h1M308 466.5h2M310 467.5h1M311 468.5h1M312 469.5h2M314 470.5h1M315 471.5h1M316 472.5h2M318 473.5h1M319 474.5h1M319 474.5h16M334 474.5h1M335 475.5h2M337 476.5h2M339 477.5h1M340 478.5h2M342 479.5h1M343 480.5h2M345 481.5h2M347 482.5h1M348 483.5h2M350 484.5h1M350 484.5h1M351 485.5h2M353 486.5h2M355 487.5h2M357 488.5h2M359 489.5h2M361 490.5h2M363 491.5h2M365 492.5h1M365 492.5h1M366 493.5h2M368 494.5h1M369 495.5h1M370 496.5h2M372 497.5h1M373 498.5h1M374 499.5h2M376 500.5h1M377 501.5h1M378 502.5h2M380 503.5h1M380 503.5h3M383 504.5h6M389 505.5h5M394 506.5h3M396 506.5h4M400 505.5h8M408 504.5h4M411 504.5h3M414 505.5h6M420 506.5h5M425 507.5h3M427 507.5h3M430 508.5h5M435 509.5h5M440 510.5h3M442 510.5h9M451 511.5h8M458 511.5h3M461 510.5h5M466 509.5h5M471 508.5h3M473 508.5h9M482 509.5h8M489 509.5h1M490 508.5h2M492 507.5h2M494 506.5h2M496 505.5h2M498 504.5h2M500 503.5h2M502 502.5h2M504 501.5h1M504 501.5h2M506 500.5h2M508 499.5h2M510 498.5h3M513 497.5h2M515 496.5h2M517 495.5h2M519 494.5h2M520 494.5h2M522 493.5h3M525 492.5h3M528 491.5h3M531 490.5h3M534 489.5h2M535 489.5h5M540 490.5h8M548 491.5h4M551 491.5h2M553 490.5h3M556 489.5h3M559 488.5h3M562 487.5h3M565 486.5h2M566 486.5h1M567 485.5h1M568 484.5h1M569 483.5h1M570 482.5h1M571 481.5h1M572 480.5h1M573 479.5h2M575 478.5h1M576 477.5h1M577 476.5h1M578 475.5h1M579 474.5h1M580 473.5h1M581 472.5h1M581.5 472v1M582.5 471v1M583.5 469v2M584.5 468v1M585.5 467v1M586.5 466v1M587.5 464v2M588.5 463v1M589.5 462v1M590.5 461v1M591.5 459v2M592.5 458v1M593.5 457v1M594.5 456v1M595.5 454v2M596.5 453v1M597.5 452v1M597 452.5h4M601 451.5h8M609 450.5h4M612 450.5h5M617 451.5h8M625 452.5h4M628 452.5h3M631 453.5h5M636 454.5h5M641 455.5h3M643 455.5h2M645 456.5h2M647 457.5h2M649 458.5h2M651 459.5h2M653 460.5h2M655 461.5h2M657 462.5h2M659 463.5h1M659.5 463v1M660.5 464v1M661.5 465v1M662.5 466v1M663.5 467v2M664.5 469v1M665.5 470v1M666.5 471v1M667.5 472v1M668.5 473v1M669.5 474v1M670.5 475v2M671.5 477v1M672.5 478v1M673.5 479v1M674.5 480v1M674.5 480v1M675.5 481v2M676.5 483v1M677.5 484v2M678.5 486v1M679.5 487v1M680.5 488v2M681.5 490v1M682.5 491v2M683.5 493v1M684.5 494v2M685.5 496v1M686.5 497v1M687.5 498v2M688.5 500v1M689.5 501v2M690.5 503v1M690 503.5h2M692 504.5h2M694 505.5h2M696 506.5h2M698 507.5h2M700 508.5h2M702 509.5h2M704 510.5h2M705 510.5h2M707 509.5h2M709 508.5h2M711 507.5h3M714 506.5h2M716 505.5h2M718 504.5h2M720 503.5h2M721 503.5h16M736 503.5h1M737 502.5h2M739 501.5h2M741 500.5h1M742 499.5h2M744 498.5h2M746 497.5h1M747 496.5h2M749 495.5h2M751 494.5h1M751 494.5h17M767 494.5h1M768 493.5h1M769 492.5h1M770 491.5h2M772 490.5h1M773 489.5h1M774 488.5h1M775 487.5h1M776 486.5h1M777 485.5h1M778 484.5h2M780 483.5h1M781 482.5h1M782 481.5h1M782 481.5h3M785 482.5h4M789 483.5h4M793 484.5h4M797 485.5h2M798 485.5h4M802 484.5h8M810 483.5h4M813 483.5h1M814 484.5h2M816 485.5h2M818 486.5h2M820 487.5h2M822 488.5h1M823 489.5h2M825 490.5h2M827 491.5h2M829 492.5h1M829 492.5h4M833 491.5h8M841 490.5h4M844 490.5h2M846 489.5h3M849 488.5h4M853 487.5h3M856 486.5h3M859 485.5h2M860 485.5h1M861 484.5h1M862 483.5h1M863 482.5h1M864 481.5h1M865 480.5h1M866 479.5h1M867 478.5h1M868 477.5h1M869 476.5h1M870 475.5h1M871 474.5h1M872 473.5h1M873 472.5h1M874 471.5h1M875 470.5h1M875.5 470v1M876.5 469v1M877.5 468v1M878.5 467v1M879.5 466v1M880.5 465v1M881.5 464v1M882.5 463v1M883.5 461v2M884.5 460v1M885.5 459v1M886.5 458v1M887.5 457v1M888.5 456v1M889.5 455v1M890.5 454v1M891.5 453v1M891 453.5h1M892 452.5h2M894 451.5h1M895 450.5h2M897 449.5h1M898 448.5h2M900 447.5h1M901 446.5h2M903 445.5h1M904 444.5h2M906 443.5h1M906 443.5h3M909 442.5h4M913 441.5h4M917 440.5h4M921 439.5h2M922 439.5h16" fill="none" stroke="#000080" stroke-width="1"/>
<path d="M10 440.5h2M12 441.5h2M14 442.5h3M17 443.5h2M19 444.5h3M22 445.5h2M24 446.5h2M25 446.5h4M29 445.5h8M37 444.5h4M40 444.5h3M43 443.5h4M47 442.5h4M51 441.5h4M55 440.5h2M56 440.5h2M58 439.5h3M61 438.5h3M64 437.5h3M67 436.5h3M70 435.5h2M71 435.5h9M80 436.5h8M87 436.5h2M89 437.5h3M92 438.5h3M95 439.5h3M98 440.5h3M101 441.5h2M102 441.5h1M103 442.5h1M104 443.5h1M105 444.5h2M107 445.5h1M108 446.5h1M109 447.5h1M110 448.5h1M111 449.5h1M112 450.5h1M113 451.5h2M115 452.5h1M116 453.5h1M117 454.5h1M118 455.5h1M118.5 455v1M119.5 456v1M120.5 457v1M121.5 458v1M122.5 459v1M123.5 460v1M124.5 461v1M125.5 462v2M126.5 464v1M127.5 465v1M128.5 466v1M129.5 467v1M130.5 468v1M131.5 469v1M132.5 470v1M133.5 471v1M133 471.5h1M134 472.5h1M135 473.5h1M136 474.5h2M138 475.5h1M139 476.5h1M140 477.5h1M141 478.5h1M142 479.5h1M143 480.5h1M144 481.5h2M146 482.5h1M147 483.5h1M148 484.5h1M149 485.5h1M149 485.5h2M151 484.5h4M155 483.5h4M159 482.5h4M163 481.5h2M164 481.5h1M165 480.5h2M167 479.5h1M168 478.5h1M169 477.5h2M171 476.5h1M172 475.5h1M173 474.5h2M175 473.5h1M176 472.5h1M177 471.5h2M179 470.5h1M180 469.5h1M180.5 469v1M181.5 468v1M182.5 467v1M183.5 466v1M184.5 464v2M185.5 463v1M186.5 462v1M187.5 461v1M188.5 460v1M189.5 459v1M190.5 458v1M191.5 456v2M192.5 455v1M193.5 454v1M194.5 453v1M195.5 452v1M195 452.5h2M197 451.5h2M199 450.5h3M202 449.5h2M204 448.5h3M207 447.5h2M209 446.5h2M210 446.5h3M213 445.5h6M219 444.5h5M224 443.5h3M226 443.5h8M234 442.5h8M241 442.5h5M246 441.5h8M254 440.5h4M257 440.5h16M272 440.5h3M275 441.5h6M281 442.5h5M286 443.5h3M288 443.5h1M289 444.5h2M291 445.5h2M293 446.5h2M295 447.5h2M297 448.5h2M299 449.5h2M301 450.5h2M303 451.5h1M303 451.5h1M304 452.5h2M306 453.5h1M307 454.5h1M308 455.5h2M310 456.5h1M311 457.5h1M312 458.5h2M314 459.5h1M315 460.5h1M316 461.5h2M318 462.5h1M319 463.5h1M319 463.5h2M321 464.5h2M323 465.5h2M325 466.5h2M327 467.5h2M329 468.5h2M331 469.5h2M333 470.5h2M334 470.5h2M336 471.5h2M338 472.5h2M340 473.5h3M343 474.5h2M345 475.5h2M347 476.5h2M349 477.5h2M350 477.5h2M352 478.5h2M354 479.5h3M357 480.5h2M359 481.5h3M362 482.5h2M364 483.5h2M365 483.5h1M366 484.5h2M368 485.5h1M369 486.5h2M371 487.5h1M372 488.5h2M374 489.5h1M375 490.5h2M377 491.5h1M378 492.5h2M380 493.5h1M380 493.5h2M382 494.5h2M384 495.5h2M386 496.5h3M389 497.5h2M391 498.5h2M393 499.5h2M395 500.5h2M396 500.5h2M398 501.5h4M402 502.5h4M406 503.5h4M410 504.5h2M411 504.5h5M416 505.5h8M424 506.5h4M427 506.5h8M435 507.5h8M442 507.5h5M447 508.5h8M455 509.5h4M458 509.5h8M466 510.5h8M473 510.5h9M482 509.5h8M489 509.5h3M492 508.5h5M497 507.5h5M502 506.5h3M504 506.5h2M506 505.5h3M509 504.5h4M513 503.5h3M516 502.5h3M519 501.5h2M520 501.5h2M522 500.5h2M524 499.5h2M526 498.5h2M528 497.5h2M530 496.5h2M532 495.5h2M534 494.5h2M535 494.5h3M538 493.5h6M544 492.5h5M549 491.5h3M551 491.5h4M555 490.5h8M563 489.5h4M566 489.5h2M568 488.5h2M570 487.5h3M573 486.5h2M575 485.5h3M578 484.5h2M580 483.5h2M581 483.5h1M582 482.5h1M583 481.5h2M585 480.5h1M586 479.5h1M587 478.5h1M588 477.5h2M590 476.5h1M591 475.5h1M592 474.5h1M593 473.5h1M594 472.5h2M596 471.5h1M597 470.5h1M597 470.5h1M598 469.5h1M599 468.5h2M601 467.5h1M602 466.5h1M603 465.5h1M604 464.5h2M606 463.5h1M607 462.5h1M608 461.5h1M609 460.5h2M611 459.5h1M612 458.5h1M612 458.5h2M614 457.5h2M616 456.5h2M618 455.5h3M621 454.5h2M623 453.5h2M625 452.5h2M627 451.5h2M628 451.5h8M636 452.5h8M643 452.5h2M645 453.5h3M648 454.5h4M652 455.5h3M655 456.5h3M658 457.5h2M659 457.5h1M660 458.5h2M662 459.5h2M664 460.5h1M665 461.5h2M667 462.5h2M669 463.5h1M670 464.5h2M672 465.5h2M674 466.5h1M674 466.5h1M675 467.5h1M676 468.5h1M677 469.5h1M678 470.5h1M679 471.5h1M680 472.5h1M681 473.5h1M682 474.5h1M683 475.5h1M684 476.5h1M685 477.5h1M686 478.5h1M687 479.5h1M688 480.5h1M689 481.5h1M690 482.5h1M690.5 482v1M691.5 483v1M692.5 484v1M693.5 485v1M694.5 486v1M695.5 487v1M696.5 488v1M697.5 489v2M698.5 491v1M699.5 492v1M700.5 493v1M701.5 494v1M702.5 495v1M703.5 496v1M704.5 497v1M705.5 498v1M705 498.5h2M707 499.5h2M709 500.5h2M711 501.5h2M713 502.5h2M715 503.5h2M717 504.5h2M719 505.5h2M721 506.5h1M721 506.5h16M736 506.5h2M738 505.5h2M740 504.5h3M743 503.5h2M745 502.5h3M748 501.5h2M750 500.5h2M751 500.5h3M754 499.5h6M760 498.5h5M765 497.5h3M767 497.5h2M769 496.5h2M771 495.5h2M773 494.5h2M775 493.5h2M777 492.5h2M779 491.5h2M781 490.5h2M782 490.5h3M785 489.5h6M791 488.5h5M796 487.5h3M798 487.5h2M800 486.5h4M804 485.5h4M808 484.5h4M812 483.5h2M813 483.5h3M816 484.5h4M820 485.5h4M824 486.5h4M828 487.5h2M829 487.5h8M837 488.5h8M844 488.5h9M853 489.5h8M860 489.5h1M861 488.5h2M863 487.5h2M865 486.5h2M867 485.5h2M869 484.5h2M871 483.5h2M873 482.5h2M875 481.5h1M875 481.5h1M876 480.5h2M878 479.5h1M879 478.5h1M880 477.5h2M882 476.5h1M883 475.5h1M884 474.5h2M886 473.5h1M887 472.5h1M888 471.5h2M890 470.5h1M891 469.5h1M891 469.5h1M892 468.5h1M893 467.5h1M894 466.5h1M895 465.5h1M896 464.5h1M897 463.5h1M898 462.5h2M900 461.5h1M901 460.5h1M902 459.5h1M903 458.5h1M904 457.5h1M905 456.5h1M906 455.5h1M906 455.5h1M907 454.5h2M909 453.5h2M911 452.5h1M912 451.5h2M914 450.5h1M915 449.5h2M917 448.5h2M919 447.5h1M920 446.5h2M922 445.5h1M922 445.5h2M924 444.5h3M927 443.5h3M930 442.5h3M933 441.5h3M936 440.5h2" fill="none" stroke="#ffc000" stroke-width="1"/>
<rect x="15" y="419" width="8" height="8" fill="#000080"/>
<text x="25.5" y="427" font-size="10" fill="#000" text-anchor="start" class="lg" textLength="125" lengthAdjust="spacing">Slow Stochastik K(14), D(3)</text>
<rect x="157" y="419" width="8" height="8" fill="#ffc000"/>
<text x="167" y="427" font-size="10" fill="#000" text-anchor="start" class="lg" textLength="38.5" lengthAdjust="spacing">SMA (3)</text>
<text x="969.5" y="434" font-size="10.4" fill="#000" text-anchor="start" letter-spacing="0.4">100</text>
<text x="969.5" y="451" font-size="10.4" fill="#000" text-anchor="start" letter-spacing="0.4">80</text>
<text x="969.5" y="476" font-size="10.4" fill="#000" text-anchor="start" letter-spacing="0.4">50</text>
<text x="969.5" y="502" font-size="10.4" fill="#000" text-anchor="start" letter-spacing="0.4">20</text>
<text x="969.5" y="519" font-size="10.4" fill="#000" text-anchor="start" letter-spacing="0.4">0</text>
</svg>
<div class="ft" style="top:524px">© 1996-2005 IS.Teledata AG, all rights reserved.</div>
<div class="ft" style="top:534px">Implemented and powered by IS.Teledata AG.</div>
<div class="ft" style="top:544px">Den Chart Analyzer finden Sie unter: www.comdirect.de --&gt; Informer --&gt; Tools</div>
</body></html>
